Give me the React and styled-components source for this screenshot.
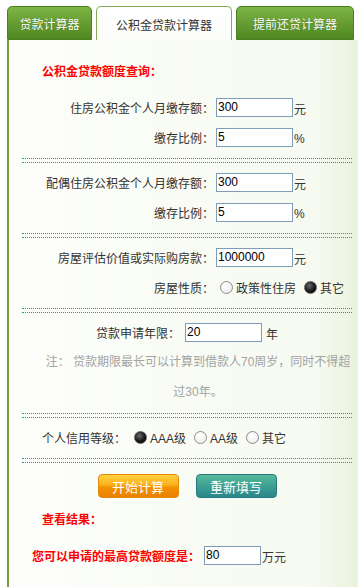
import React from 'react';
import styled, { createGlobalStyle } from 'styled-components';

const GlobalStyle = createGlobalStyle`
    html, body {
        margin: 0;
        padding: 0;
        background: #fff;
    }

    body {
        font-family: "Liberation Sans", "Noto Sans CJK SC", sans-serif;
        font-size: 12px;
        color: #333;
    }
`;

const Page = styled.div`
    display: flex;
    flex-direction: column;
    min-height: 100vh;
    width: 358px;
    overflow: hidden;
`;

const TabBar = styled.div`
    display: flex;
    align-items: flex-end;
    gap: 4px;
    height: 40px;
    padding-left: 7px;
    overflow: hidden;
    flex-shrink: 0;
`;

const Tab = styled.div`
    flex-shrink: 0;
    box-sizing: border-box;
    width: ${props => props.$width}px;
    height: 34px;
    display: flex;
    align-items: center;
    justify-content: center;
    border-radius: 5px 5px 0 0;
    border: 1px solid ${props => (props.$active ? '#86ab55' : '#4c7f22')};
    border-bottom: ${props => (props.$active ? 'none' : '1px solid #4c7f22')};
    background: ${props => (props.$active
        ? 'linear-gradient(#ffffff, #fbfdf9)'
        : 'linear-gradient(#7db545, #62992f 60%, #4f8723)')};
    color: ${props => (props.$active ? '#333' : '#fff')};
    text-shadow: ${props => (props.$active ? 'none' : '0 0 1px rgba(40, 70, 10, 0.6)')};
    font-size: 12px;
    padding-top: 1px;
`;

const Panel = styled.div`
    flex: 1;
    margin-left: 7px;
    border-left: 2px solid #7c9a3e;
    padding: 22px 6px 20px 13px;
    background: linear-gradient(to right, #fdfefb, #f6faf0 88%, #e9f2dd);
`;

const Heading = styled.div`
    line-height: 20px;
    color: #f00;
    font-weight: bold;
    padding-left: ${props => props.$indent}px;
    margin-bottom: ${props => props.$after || 0}px;
`;

const Section = styled.div`
    padding: 4px 0 6px;
`;

const Row = styled.div`
    display: flex;
    align-items: center;
    height: 30px;
    justify-content: ${props => (props.$center ? 'center' : 'flex-start')};
    padding-left: ${props => props.$indent || 0}px;
`;

const Label = styled.span`
    display: inline-block;
    width: ${props => (props.$width ? props.$width + 'px' : 'auto')};
    text-align: right;
    white-space: nowrap;
`;

const TextInput = styled.input`
    box-sizing: border-box;
    width: ${props => props.$width}px;
    height: 19px;
    margin: 0 0 0 ${props => props.$gap}px;
    padding: 0 1px;
    border: 1px solid #7f9db9;
    background: #fff;
    font-family: "Liberation Sans", sans-serif;
    font-size: 12px;
    color: #000;
    outline: none;
`;

const Unit = styled.span`
    margin-left: ${props => props.$gap}px;
    padding-top: 3px;
`;

const Radio = styled.input.attrs({ type: 'radio' })`
    appearance: none;
    box-sizing: border-box;
    width: 13px;
    height: 13px;
    margin: 0 3px 0 ${props => props.$gap}px;
    border-radius: 50%;
    border: 1px solid #8c8c8c;
    background: radial-gradient(circle at 40% 35%, #ffffff, #e9e9e9);

    &:checked {
        border-color: #5a5a5a;
        background: radial-gradient(circle at 40% 35%, #6a6a6a, #111 60%);
    }
`;

const Note = styled.div`
    padding-left: 22px;
    text-align: center;
    line-height: 30px;
    color: #a3a3a3;
    white-space: nowrap;
`;

const Divider = styled.div`
    height: 3px;
    border-top: 1px dotted #1f9b8a;
    border-bottom: 1px dotted #1f9b8a;
`;

const ButtonRow = styled.div`
    display: flex;
    justify-content: center;
    gap: 17px;
    margin: 11px 0 12px;
`;

const Button = styled.button`
    box-sizing: border-box;
    width: 81px;
    height: 24px;
    padding: 0;
    border-radius: 4px;
    border: 1px solid ${props => (props.$tone === 'orange' ? '#e58a0a' : '#287a80')};
    background: ${props => (props.$tone === 'orange'
        ? 'linear-gradient(#ffd23f, #fbb01a 45%, #f39200 55%, #e98000)'
        : 'linear-gradient(#55b99b, #3ea192 50%, #2b858a)')};
    color: #fff;
    font-family: "Liberation Sans", "Noto Sans CJK SC", sans-serif;
    font-size: 13px;
    cursor: pointer;
`;

const ResultRow = styled.div`
    display: flex;
    align-items: center;
    margin-top: 15px;
    padding-left: 10px;
    height: 20px;
`;

const ResultLabel = styled.span`
    color: #f00;
    font-weight: bold;
`;

const tabs = [
    { label: '贷款计算器', width: 85 },
    { label: '公积金贷款计算器', width: 136, active: true },
    { label: '提前还贷计算器', width: 118 },
    { label: '', width: 90 },
];

function AmountRow({ label, value, unit }) {
    return (
        <Row>
            <Label $width={192}>{label}</Label>
            <TextInput $width={77} $gap={2} defaultValue={value} />
            <Unit $gap={1}>{unit}</Unit>
        </Row>
    );
}

function App() {
    return (
        <Page>
            <GlobalStyle />
            <TabBar>
                {tabs.map((tab, i) => (
                    <Tab key={i} $width={tab.width} $active={tab.active}>{tab.label}</Tab>
                ))}
            </TabBar>

            <Panel>
                <Heading $indent={20} $after={6}>公积金贷款额度查询：</Heading>

                <Section>
                    <AmountRow label="住房公积金个人月缴存额：" value="300" unit="元" />
                    <AmountRow label="缴存比例：" value="5" unit="%" />
                </Section>
                <Divider />

                <Section>
                    <AmountRow label="配偶住房公积金个人月缴存额：" value="300" unit="元" />
                    <AmountRow label="缴存比例：" value="5" unit="%" />
                </Section>
                <Divider />

                <Section>
                    <AmountRow label="房屋评估价值或实际购房款：" value="1000000" unit="元" />
                    <Row>
                        <Label $width={192}>房屋性质：</Label>
                        <Radio name="house" $gap={6} />
                        <span>政策性住房</span>
                        <Radio name="house" $gap={8} defaultChecked />
                        <span>其它</span>
                    </Row>
                </Section>
                <Divider />

                <Section>
                    <Row $center>
                        <Label>贷款申请年限：</Label>
                        <TextInput $width={77} $gap={5} defaultValue="20" />
                        <Unit $gap={4}>年</Unit>
                    </Row>
                    <Note>
                        注： 贷款期限最长可以计算到借款人70周岁，同时不得超<br />过30年。
                    </Note>
                </Section>
                <Divider />

                <Section>
                    <Row $indent={20}>
                        <Label>个人信用等级：</Label>
                        <Radio name="credit" $gap={8} defaultChecked />
                        <span>AAA级</span>
                        <Radio name="credit" $gap={8} />
                        <span>AA级</span>
                        <Radio name="credit" $gap={8} />
                        <span>其它</span>
                    </Row>
                </Section>
                <Divider />

                <ButtonRow>
                    <Button $tone="orange">开始计算</Button>
                    <Button $tone="teal">重新填写</Button>
                </ButtonRow>

                <Heading $indent={20}>查看结果：</Heading>

                <ResultRow>
                    <ResultLabel>您可以申请的最高贷款额度是：</ResultLabel>
                    <TextInput $width={57} $gap={4} defaultValue="80" />
                    <Unit $gap={1}>万元</Unit>
                </ResultRow>
            </Panel>
        </Page>
    );
}

export default App;
